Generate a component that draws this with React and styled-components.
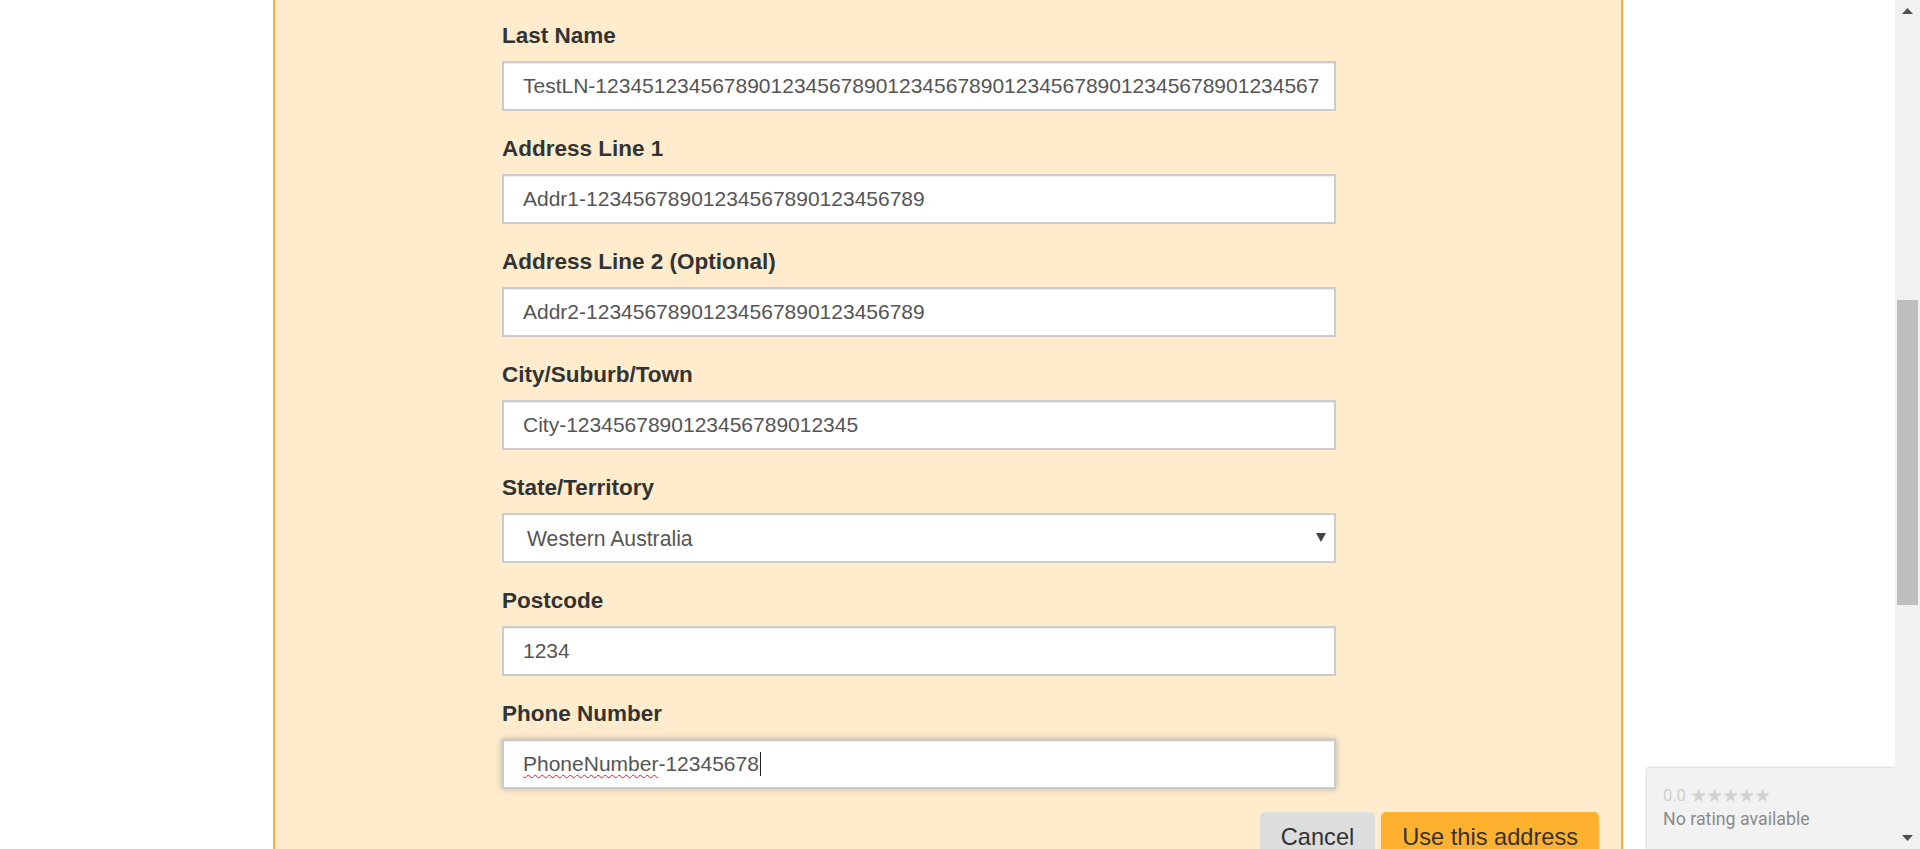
import React from 'react';
import styled, { createGlobalStyle } from 'styled-components';

const GlobalStyle = createGlobalStyle`
    html, body {
        margin: 0;
        padding: 0;
        overflow: hidden;
        background: #fff;
    }
    body {
        font-family: "Liberation Sans", Arial, sans-serif;
        color: #333;
    }
`;

const Screen = styled.div`
    display: flex;
    width: 1920px;
    height: 849px;
    overflow: hidden;
`;

const Main = styled.div`
    position: relative;
    flex: 1;
    background: #fff;
    overflow: hidden;
`;

const Panel = styled.div`
    box-sizing: border-box;
    margin-left: 273px;
    width: 1350px;
    height: 100%;
    background: #feeccc;
    border-left: 2px solid #fbb03b;
    border-right: 2px solid #fbb03b;
    padding: 22px 22px 0 227px;
`;

const Form = styled.form`
    width: 834px;
`;

const Group = styled.div`
    margin-bottom: 24px;
    &:last-child {
        margin-bottom: 23px;
    }
`;

const Label = styled.label`
    display: block;
    font-size: 22.5px;
    line-height: 27px;
    font-weight: 700;
    color: #333;
    margin-bottom: 12px;
`;

const Input = styled.input`
    display: block;
    box-sizing: border-box;
    width: 100%;
    height: 50px;
    margin: 0;
    padding: 0 10px 0 19px;
    border: 2px solid #cccccc;
    border-radius: 0;
    background: #fff;
    box-shadow: inset 0 1px 1px rgba(0, 0, 0, 0.075);
    font-family: "Liberation Sans", Arial, sans-serif;
    font-size: 21px;
    color: #555;
    outline: none;
`;

const FocusedBox = styled.div`
    display: flex;
    align-items: center;
    box-sizing: border-box;
    width: 100%;
    height: 50px;
    padding: 0 19px;
    border: 2px solid #c8cccc;
    background: #fff;
    box-shadow: inset 0 1px 1px rgba(0, 0, 0, 0.075), 0 0 6px rgba(120, 130, 130, 0.55);
    font-size: 21px;
    color: #555;
    white-space: pre;
`;

const Misspelled = styled.span`
    text-decoration: underline wavy #e02020;
    text-decoration-thickness: 1px;
    text-underline-offset: 3px;
`;

const Caret = styled.span`
    display: inline-block;
    width: 1px;
    height: 24px;
    margin-left: 1px;
    background: #222;
`;

const SelectWrap = styled.div`
    position: relative;
`;

const Select = styled.select`
    display: block;
    box-sizing: border-box;
    width: 100%;
    height: 50px;
    margin: 0;
    padding: 0 40px 0 23px;
    border: 2px solid #cccccc;
    border-radius: 0;
    background: #fff;
    appearance: none;
    -webkit-appearance: none;
    font-family: "Liberation Sans", Arial, sans-serif;
    font-size: 21.2px;
    color: #555;
    outline: none;
`;

const SelectArrow = styled.svg`
    position: absolute;
    right: 10px;
    top: 20px;
    pointer-events: none;
`;

const ButtonRow = styled.div`
    display: flex;
    justify-content: flex-end;
    gap: 6px;
`;

const Button = styled.button`
    box-sizing: border-box;
    padding: 9px 21px;
    border: none;
    border-radius: 5px;
    background: ${props => props.primary ? '#fdb12e' : '#dcdddd'};
    color: #333;
    font-family: "Liberation Sans", Arial, sans-serif;
    font-size: 23.6px;
    line-height: 32px;
    cursor: pointer;
`;

const Badge = styled.div`
    position: absolute;
    right: 0;
    bottom: 0;
    box-sizing: border-box;
    width: 248px;
    height: 81px;
    padding: 19px 16px 0 16px;
    background: #f2f2f2;
    box-shadow: 0 0 3px rgba(0, 0, 0, 0.28);
    font-family: Roboto, "Liberation Sans", Arial, sans-serif;
`;

const Score = styled.div`
    font-size: 16.5px;
    line-height: 18px;
    color: #cfcfcf;
    display: flex;
    align-items: center;
    gap: 4px;
`;

const Stars = styled.span`
    font-size: 18.5px;
    letter-spacing: -1px;
    color: #d3d3d3;
`;

const NoRating = styled.div`
    margin-top: 4px;
    font-size: 17.8px;
    line-height: 20px;
    color: #8a8a8a;
`;

const Scrollbar = styled.div`
    display: flex;
    flex-direction: column;
    width: 25px;
    background: #f1f1f1;
`;

const ScrollArrow = styled.div`
    display: flex;
    align-items: center;
    justify-content: center;
    height: 22px;
`;

const Track = styled.div`
    flex: 1;
    padding: 278px 2px 0 2px;
`;

const Thumb = styled.div`
    height: 305px;
    background: #bebebe;
`;

const fields = [
    { label: 'Last Name', value: 'TestLN-12345' + '1234567890'.repeat(5) + '1234567' },
    { label: 'Address Line 1', value: 'Addr1-12345678901234567890123456789' },
    { label: 'Address Line 2 (Optional)', value: 'Addr2-12345678901234567890123456789' },
    { label: 'City/Suburb/Town', value: 'City-1234567890123456789012345' },
];

const states = [
    'Australian Capital Territory',
    'New South Wales',
    'Northern Territory',
    'Queensland',
    'South Australia',
    'Tasmania',
    'Victoria',
    'Western Australia',
];

export default function App() {
    return (
        <>
            <GlobalStyle />
            <Screen>
                <Main>
                    <Panel>
                        <Form onSubmit={e => e.preventDefault()}>
                            {fields.map(f => (
                                <Group key={f.label}>
                                    <Label>{f.label}</Label>
                                    <Input type="text" defaultValue={f.value} />
                                </Group>
                            ))}

                            <Group>
                                <Label>State/Territory</Label>
                                <SelectWrap>
                                    <Select defaultValue="Western Australia">
                                        {states.map(s => <option key={s}>{s}</option>)}
                                    </Select>
                                    <SelectArrow width="10" height="9" viewBox="0 0 10 9">
                                        <path d="M0 0 L10 0 L5 9 Z" fill="#444" />
                                    </SelectArrow>
                                </SelectWrap>
                            </Group>

                            <Group>
                                <Label>Postcode</Label>
                                <Input type="text" defaultValue="1234" />
                            </Group>

                            <Group>
                                <Label>Phone Number</Label>
                                <FocusedBox>
                                    <Misspelled>PhoneNumber</Misspelled>-12345678<Caret />
                                </FocusedBox>
                            </Group>
                        </Form>

                        <ButtonRow>
                            <Button type="button">Cancel</Button>
                            <Button type="button" primary>Use this address</Button>
                        </ButtonRow>
                    </Panel>

                    <Badge>
                        <Score>0.0 <Stars>★★★★★</Stars></Score>
                        <NoRating>No rating available</NoRating>
                    </Badge>
                </Main>

                <Scrollbar>
                    <ScrollArrow>
                        <svg width="11" height="6" viewBox="0 0 11 6"><path d="M0 6 L5.5 0 L11 6 Z" fill="#505050" /></svg>
                    </ScrollArrow>
                    <Track><Thumb /></Track>
                    <ScrollArrow>
                        <svg width="11" height="6" viewBox="0 0 11 6"><path d="M0 0 L5.5 6 L11 0 Z" fill="#505050" /></svg>
                    </ScrollArrow>
                </Scrollbar>
            </Screen>
        </>
    );
}
